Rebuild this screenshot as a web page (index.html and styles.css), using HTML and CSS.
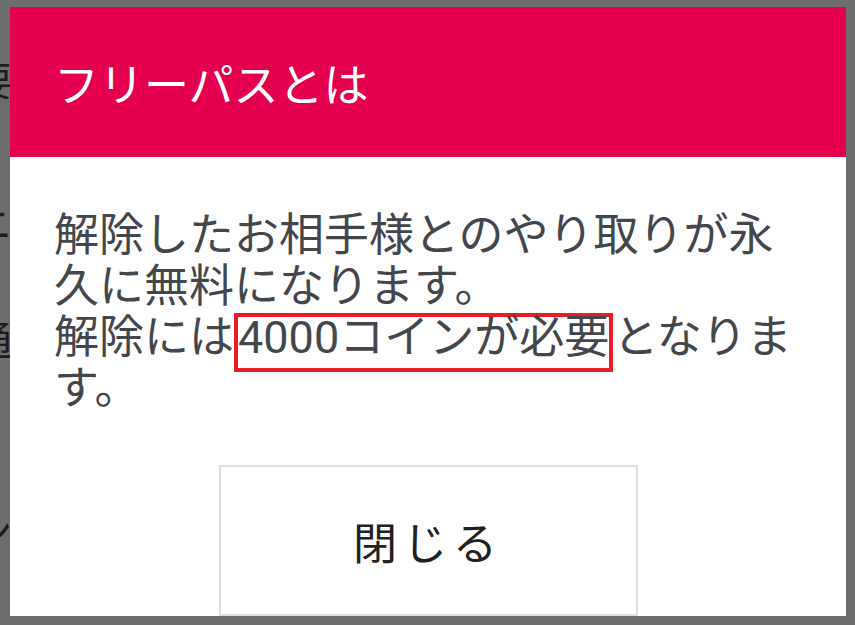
FILE: index.html
```html
<!DOCTYPE html>
<html lang="ja">
<head>
<meta charset="utf-8">
<title>フリーパスとは</title>
<link rel="stylesheet" href="styles.css">
</head>
<body>
<div class="page">
  <div class="frag f1"><span>要</span></div>
  <div class="frag f2"><span>ニ</span></div>
  <div class="frag f3"><span>通</span></div>
  <div class="frag f4"><span>ン</span></div>
</div>
<div class="overlay">
  <div class="dialog">
    <div class="dialog-header">
      <h1 class="dialog-title">フリーパスとは</h1>
    </div>
    <div class="dialog-body">
      <p class="message">解除したお相手様とのやり取りが永久に無料になります。<br>解除には<span class="hl">4000コインが必要</span>となります。</p>
      <div class="actions">
        <button class="close-btn" type="button">閉じる</button>
      </div>
    </div>
  </div>
</div>
</body>
</html>
```

FILE: styles.css
```css
html, body {
  margin: 0;
  padding: 0;
}
body {
  width: 855px;
  height: 625px;
  overflow: hidden;
  background: #6d6d6d;
  position: relative;
  font-family: Roboto, "Noto Sans CJK JP", sans-serif;
}

/* dimmed page behind the modal */
.page {
  width: 12px;
  padding-top: 59px;
  color: #1c1c1c;
  font-family: "Noto Sans CJK JP", sans-serif;
  font-size: 40px;
  line-height: 40px;
}
.frag {
  display: flex;
  justify-content: flex-end;
  overflow: hidden;
  height: 40px;
  white-space: nowrap;
}
.f2 { margin-top: 103px; }
.f3 { margin-top: 76px; }
.f4 { margin-top: 151px; }

.overlay {
  position: absolute;
  inset: 0;
}
.dialog {
  position: absolute;
  left: 10px;
  top: 7px;
  width: 836px;
  height: 609px;
  background: #ffffff;
  overflow: hidden;
  display: flex;
  flex-direction: column;
}
.dialog-header {
  height: 150px;
  flex: none;
  background: #e4004f;
  display: flex;
  align-items: center;
  padding: 0 44px;
}
.dialog-title {
  margin: 0;
  font-family: "Noto Sans CJK JP", sans-serif;
  font-weight: 400;
  font-size: 45px;
  line-height: 45px;
  color: #ffffff;
}
.dialog-body {
  padding: 53px 44px 0;
}
.message {
  margin: 0;
  font-size: 45px;
  line-height: 51px;
  color: #43474b;
}
.hl {
  display: inline-block;
  border: 4px solid #ec1c24;
  line-height: 42px;
  padding-bottom: 9px;
  margin-bottom: -9px;
}
.actions {
  display: flex;
  justify-content: center;
  margin-top: 51px;
}
.close-btn {
  width: 419px;
  height: 151px;
  background: #ffffff;
  border: 2px solid #dedede;
  font-family: "Noto Sans CJK JP", sans-serif;
  font-size: 44px;
  letter-spacing: 6px;
  color: #212121;
  padding: 0;
}
```
